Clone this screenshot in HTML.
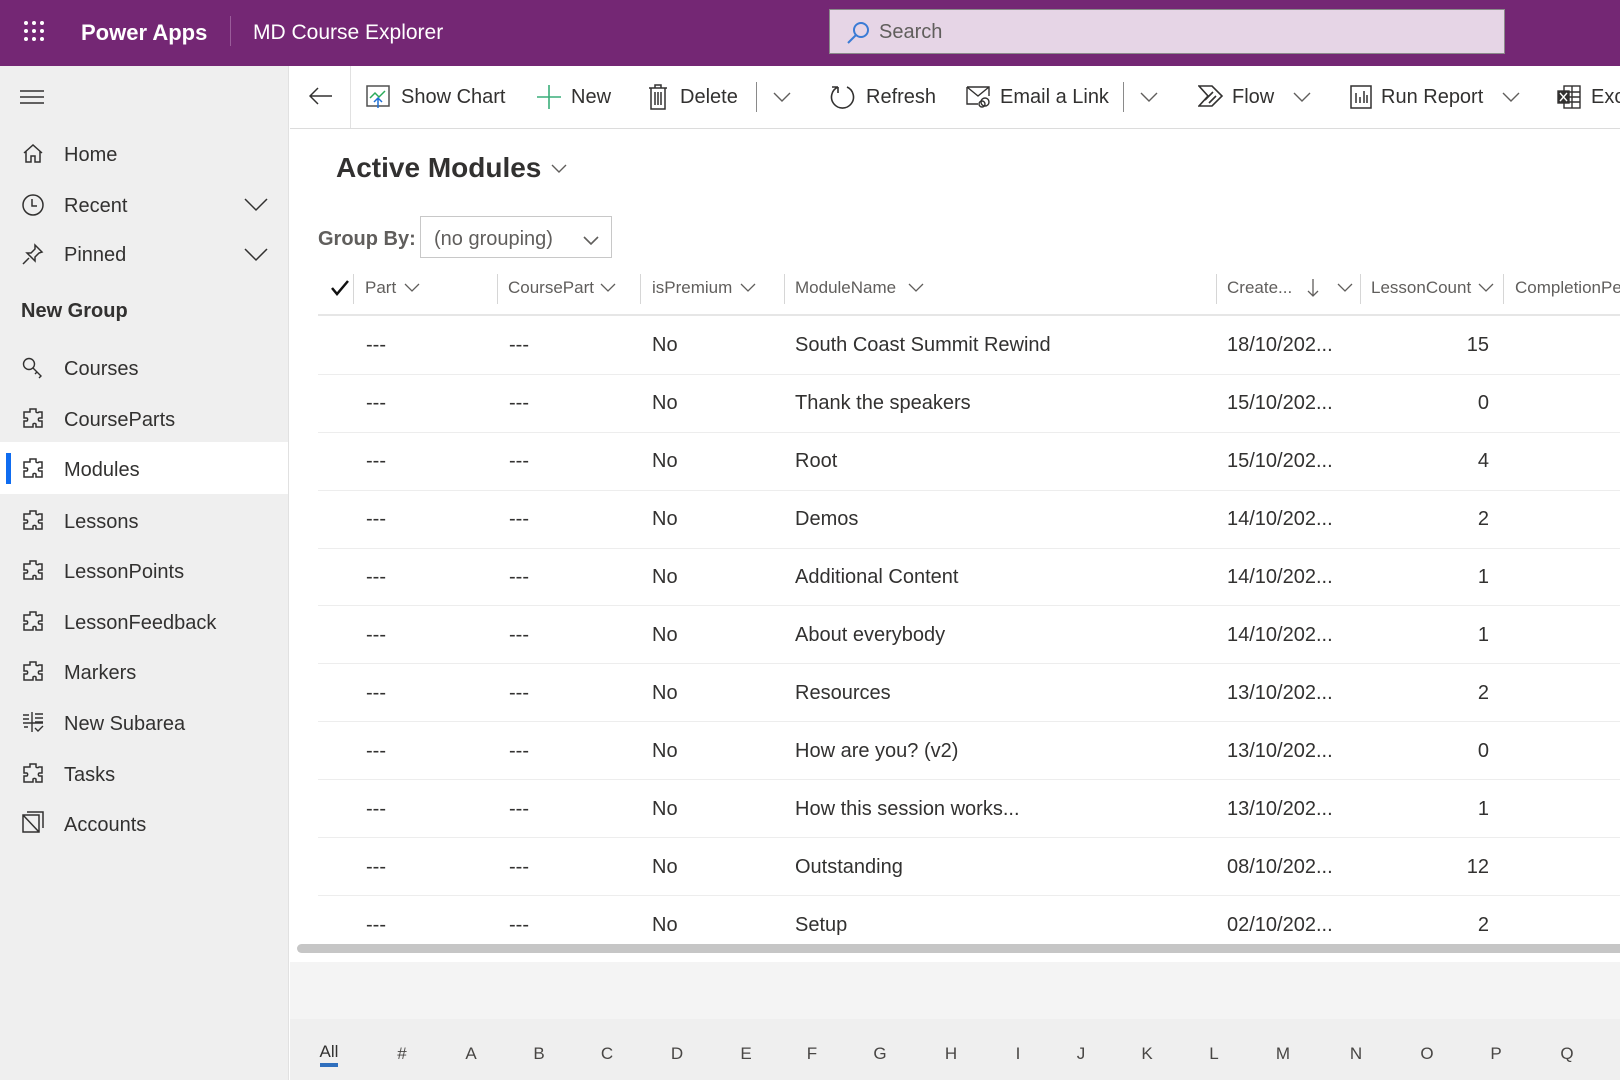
<!DOCTYPE html>
<html><head><meta charset="utf-8"><style>
*{margin:0;padding:0;box-sizing:border-box}
body{width:1620px;height:1080px;overflow:hidden;background:#fff;font-family:"Liberation Sans",sans-serif;color:#323130;position:relative}
.a{position:absolute;white-space:nowrap}
#hdr{left:0;top:0;width:1620px;height:66px;background:#742774}
#side{left:0;top:66px;width:289px;height:1014px;background:#efefef;border-right:1px solid #e1e1e1}
.nav{position:absolute;left:64px;font-size:20px;color:#323130;line-height:24px}
.ni{position:absolute;left:22px;width:22px;height:22px}
.cmd{font-size:20px;color:#323130;top:85px;line-height:24px}
.hd{font-size:17px;color:#605e5c;top:278px;line-height:20px}
.cs{position:absolute;top:274px;width:1px;height:30px;background:#d6d6d6}
.r{font-size:20px;color:#323130;line-height:24px}
.rl{position:absolute;left:318px;width:1302px;height:1px;background:#ededed}
.al{font-size:17px;color:#484644;top:1044px;line-height:20px;transform:translateX(-50%)}
</style></head><body>
<div class="a" id="hdr"></div>
<svg class="a" style="left:23px;top:20px" width="22" height="22" viewBox="0 0 22 22" fill="#fff"><circle cx="3" cy="3" r="2"/><circle cx="11" cy="3" r="2"/><circle cx="19" cy="3" r="2"/><circle cx="3" cy="11" r="2"/><circle cx="11" cy="11" r="2"/><circle cx="19" cy="11" r="2"/><circle cx="3" cy="19" r="2"/><circle cx="11" cy="19" r="2"/><circle cx="19" cy="19" r="2"/></svg>
<div class="a" style="left:81px;top:19px;font-size:22px;font-weight:bold;color:#fff;line-height:28px">Power Apps</div>
<div class="a" style="left:230px;top:16px;width:1px;height:30px;background:#9a5c9a"></div>
<div class="a" style="left:253px;top:20px;font-size:21px;color:#fff;line-height:26px">MD Course Explorer</div>
<div class="a" style="left:829px;top:9px;width:676px;height:45px;background:#e6d5e6;border:1px solid #8a8a8a"></div>
<svg class="a" style="left:846px;top:21px" width="24" height="24" viewBox="0 0 24 24" fill="none" stroke="#3a7bd5" stroke-width="2"><circle cx="15" cy="9" r="7"/><path d="M10 14L2 22"/></svg>
<div class="a" style="left:879px;top:20px;font-size:20px;color:#605e5c;line-height:24px">Search</div>

<div class="a" id="side"></div>
<svg class="a" style="left:20px;top:89px" width="24" height="16" viewBox="0 0 24 16" stroke="#323130" stroke-width="1.6"><path d="M0 2H24M0 8H24M0 14H24"/></svg>
<svg class="ni" style="top:142px" viewBox="0 0 22 22" fill="none" stroke="#323130" stroke-width="1.5"><path d="M2 11L11 3l9 8M4 9v11h5v-6h4v6h5V9"/></svg>
<div class="nav" style="top:143px">Home</div>
<svg class="ni" style="top:194px" viewBox="0 0 22 22" fill="none" stroke="#323130" stroke-width="1.5"><circle cx="11" cy="11" r="10"/><path d="M10 5v7h5"/></svg>
<div class="nav" style="top:194px">Recent</div>
<svg class="a" style="left:244px;top:198px" width="24" height="14" viewBox="0 0 24 14" fill="none" stroke="#323130" stroke-width="1.5"><path d="M1 1l11 11L23 1"/></svg>
<svg class="ni" style="top:243px" viewBox="0 0 22 22" fill="none" stroke="#323130" stroke-width="1.5"><path d="M13 2l7 7-3 1-4 4 0 4-8-8 4 0 4-4z M7 15L1 21"/></svg>
<div class="nav" style="top:243px">Pinned</div>
<svg class="a" style="left:244px;top:248px" width="24" height="14" viewBox="0 0 24 14" fill="none" stroke="#323130" stroke-width="1.5"><path d="M1 1l11 11L23 1"/></svg>
<div class="nav" style="left:21px;top:299px;font-weight:bold">New Group</div>
<div class="a" style="left:0;top:442px;width:288px;height:52px;background:#fff"></div>
<div class="a" style="left:6px;top:453px;width:5px;height:31px;background:#0f6cf0"></div>
<svg class="ni" style="top:357px" viewBox="0 0 22 22" fill="none" stroke="#323130" stroke-width="1.4"><circle cx="7" cy="7" r="5.5"/><path d="M11 11l8 8-2 2M15 15l-2 2"/></svg>
<div class="nav" style="top:357px">Courses</div>
<div class="nav" style="top:408px">CourseParts</div>
<div class="nav" style="top:458px">Modules</div>
<div class="nav" style="top:510px">Lessons</div>
<div class="nav" style="top:560px">LessonPoints</div>
<div class="nav" style="top:611px">LessonFeedback</div>
<div class="nav" style="top:661px">Markers</div>
<svg class="ni" style="top:711px" viewBox="0 0 22 22" fill="none" stroke="#323130" stroke-width="1.4"><path d="M10 1v20M1 4h6M1 8h6M13 3h8M13 7h8M13 11h8M1 12h20M2 16h4M13 17l3 3 5-5"/></svg>
<div class="nav" style="top:712px">New Subarea</div>
<div class="nav" style="top:763px">Tasks</div>
<svg class="ni" style="top:811px" viewBox="0 0 22 22" fill="none" stroke="#323130" stroke-width="1.5"><path d="M1 4h16v17H1zM5 1h16v16M1 4l16 17"/></svg>
<div class="nav" style="top:813px">Accounts</div>
<svg width="0" height="0" style="position:absolute"><defs><g id="pz"><path d="M8 2h6v3a2 2 0 0 0 3 0h3v6h-3a2 2 0 0 0 0 3h3v6h-6v-3a2 2 0 0 0-3 0v3H2v-6h3a2 2 0 0 0 0-3H2V5h6z" transform="translate(0,-1)" fill="none" stroke="#323130" stroke-width="1.5"/></g></defs></svg>
<svg class="ni" style="top:408px" viewBox="0 0 22 22"><use href="#pz"/></svg>
<svg class="ni" style="top:458px" viewBox="0 0 22 22"><use href="#pz"/></svg>
<svg class="ni" style="top:510px" viewBox="0 0 22 22"><use href="#pz"/></svg>
<svg class="ni" style="top:560px" viewBox="0 0 22 22"><use href="#pz"/></svg>
<svg class="ni" style="top:611px" viewBox="0 0 22 22"><use href="#pz"/></svg>
<svg class="ni" style="top:661px" viewBox="0 0 22 22"><use href="#pz"/></svg>
<svg class="ni" style="top:763px" viewBox="0 0 22 22"><use href="#pz"/></svg>

<div class="a" style="left:290px;top:128px;width:1330px;height:1px;background:#dcdcdc"></div>
<div class="a" style="left:350px;top:66px;width:1px;height:62px;background:#e1e1e1"></div>
<svg class="a" style="left:309px;top:87px" width="24" height="18" viewBox="0 0 24 18" fill="none" stroke="#323130" stroke-width="1.5"><path d="M23 9H2M9 1L1 9l8 8"/></svg>
<svg class="a" style="left:366px;top:85px" width="24" height="24" viewBox="0 0 24 24" fill="none" stroke-width="1.5"><rect x="1" y="1" width="22" height="20" stroke="#505050"/><path d="M4 13l5-5 4 4 6-6" stroke="#2bab5a"/><path d="M12 23v-9M8 17l4-4 4 4" stroke="#1f6fd4"/></svg>
<div class="a cmd" style="left:401px">Show Chart</div>
<svg class="a" style="left:537px;top:85px" width="24" height="24" viewBox="0 0 24 24" stroke="#3aae7a" stroke-width="1.6"><path d="M12 0v24M0 12h24"/></svg>
<div class="a cmd" style="left:571px">New</div>
<svg class="a" style="left:648px;top:84px" width="20" height="26" viewBox="0 0 20 26" fill="none" stroke="#323130" stroke-width="1.5"><path d="M1 4h18M7 4V1h6v3M3 4v21h14V4M7 8v13M10 8v13M13 8v13"/></svg>
<div class="a cmd" style="left:680px">Delete</div>
<div class="a" style="left:756px;top:82px;width:1px;height:30px;background:#8a8a8a"></div>
<svg class="a" style="left:773px;top:92px" width="18" height="10" viewBox="0 0 18 10" fill="none" stroke="#605e5c" stroke-width="1.4"><path d="M1 1l8 8 8-8"/></svg>
<svg class="a" style="left:830px;top:83px" width="26" height="28" viewBox="0 0 26 28" fill="none" stroke="#323130" stroke-width="1.6"><path d="M8 4A11 11 0 1 0 17 4M8 4V10M8 4H2"/></svg>
<div class="a cmd" style="left:866px">Refresh</div>
<svg class="a" style="left:966px;top:86px" width="26" height="22" viewBox="0 0 26 22" fill="none" stroke="#323130" stroke-width="1.4"><path d="M1 1h22v9M1 1v17h11M1 1l11 9 11-9"/><circle cx="19" cy="16" r="4"/><circle cx="16" cy="18" r="3"/></svg>
<div class="a cmd" style="left:1000px">Email a Link</div>
<div class="a" style="left:1123px;top:82px;width:1px;height:30px;background:#8a8a8a"></div>
<svg class="a" style="left:1140px;top:92px" width="18" height="10" viewBox="0 0 18 10" fill="none" stroke="#605e5c" stroke-width="1.4"><path d="M1 1l8 8 8-8"/></svg>
<svg class="a" style="left:1198px;top:85px" width="26" height="22" viewBox="0 0 26 22" fill="none" stroke="#323130" stroke-width="1.6"><path d="M1 1h13l10 10-10 10H1l9-10z M7 15l8-8M11 18l7-7"/></svg>
<div class="a cmd" style="left:1232px">Flow</div>
<svg class="a" style="left:1293px;top:92px" width="18" height="10" viewBox="0 0 18 10" fill="none" stroke="#605e5c" stroke-width="1.4"><path d="M1 1l8 8 8-8"/></svg>
<svg class="a" style="left:1350px;top:85px" width="22" height="24" viewBox="0 0 22 24" fill="none" stroke="#323130" stroke-width="1.5"><rect x="1" y="1" width="20" height="22"/><path d="M6 8v10M10 12v6M14 6v12M17 10v8"/></svg>
<div class="a cmd" style="left:1381px">Run Report</div>
<svg class="a" style="left:1502px;top:92px" width="18" height="10" viewBox="0 0 18 10" fill="none" stroke="#605e5c" stroke-width="1.4"><path d="M1 1l8 8 8-8"/></svg>
<svg class="a" style="left:1557px;top:85px" width="24" height="24" viewBox="0 0 24 24" fill="none" stroke="#323130" stroke-width="1.4"><rect x="7" y="1" width="16" height="22"/><path d="M7 7h16M7 12h16M7 17h16M15 1v22"/><rect x="1" y="6" width="11" height="12" fill="#323130"/><path d="M3 8l7 8M10 8l-7 8" stroke="#fff"/></svg>
<div class="a cmd" style="left:1591px">Exc</div>

<div class="a" style="left:336px;top:151px;font-size:28px;font-weight:bold;color:#323130;line-height:34px">Active Modules</div>
<svg class="a" style="left:551px;top:164px" width="16" height="10" viewBox="0 0 16 10" fill="none" stroke="#605e5c" stroke-width="1.4"><path d="M1 1l7 7 7-7"/></svg>
<div class="a" style="left:318px;top:227px;font-size:20px;font-weight:bold;color:#605e5c;line-height:24px">Group By:</div>
<div class="a" style="left:420px;top:216px;width:192px;height:42px;border:1px solid #c8c8c8"></div>
<div class="a" style="left:434px;top:227px;font-size:20px;color:#605e5c;line-height:24px">(no grouping)</div>
<svg class="a" style="left:583px;top:236px" width="16" height="10" viewBox="0 0 16 10" fill="none" stroke="#605e5c" stroke-width="1.6"><path d="M1 1l7 7 7-7"/></svg>

<svg class="a" style="left:331px;top:280px" width="18" height="16" viewBox="0 0 18 16" fill="none" stroke="#111" stroke-width="2.5"><path d="M1 8l5 6L17 1"/></svg>
<div class="cs" style="left:353px"></div><div class="cs" style="left:497px"></div><div class="cs" style="left:640px"></div><div class="cs" style="left:784px"></div><div class="cs" style="left:1216px"></div><div class="cs" style="left:1360px"></div><div class="cs" style="left:1503px"></div>
<div class="a hd" style="left:365px">Part</div>
<div class="a hd" style="left:508px">CoursePart</div>
<div class="a hd" style="left:652px">isPremium</div>
<div class="a hd" style="left:795px">ModuleName</div>
<div class="a hd" style="left:1227px">Create...</div>
<div class="a hd" style="left:1371px">LessonCount</div>
<div class="a hd" style="left:1515px">CompletionPe</div>
<svg class="a" style="left:404px;top:283px" width="16" height="10" viewBox="0 0 16 10" fill="none" stroke="#605e5c" stroke-width="1.3"><path d="M1 1l7 7 7-7"/></svg>
<svg class="a" style="left:600px;top:283px" width="16" height="10" viewBox="0 0 16 10" fill="none" stroke="#605e5c" stroke-width="1.3"><path d="M1 1l7 7 7-7"/></svg>
<svg class="a" style="left:740px;top:283px" width="16" height="10" viewBox="0 0 16 10" fill="none" stroke="#605e5c" stroke-width="1.3"><path d="M1 1l7 7 7-7"/></svg>
<svg class="a" style="left:908px;top:283px" width="16" height="10" viewBox="0 0 16 10" fill="none" stroke="#605e5c" stroke-width="1.3"><path d="M1 1l7 7 7-7"/></svg>
<svg class="a" style="left:1307px;top:278px" width="12" height="20" viewBox="0 0 12 20" fill="none" stroke="#605e5c" stroke-width="1.3"><path d="M6 1v17M1 13l5 5 5-5"/></svg>
<svg class="a" style="left:1337px;top:283px" width="16" height="10" viewBox="0 0 16 10" fill="none" stroke="#605e5c" stroke-width="1.3"><path d="M1 1l7 7 7-7"/></svg>
<svg class="a" style="left:1478px;top:283px" width="16" height="10" viewBox="0 0 16 10" fill="none" stroke="#605e5c" stroke-width="1.3"><path d="M1 1l7 7 7-7"/></svg>
<div class="a" style="left:318px;top:314px;width:1302px;height:2px;background:#e6e6e6"></div>

<div class="rl" style="top:374px"></div><div class="rl" style="top:432px"></div><div class="rl" style="top:490px"></div><div class="rl" style="top:548px"></div><div class="rl" style="top:605px"></div><div class="rl" style="top:663px"></div><div class="rl" style="top:721px"></div><div class="rl" style="top:779px"></div><div class="rl" style="top:837px"></div><div class="rl" style="top:895px"></div>

<div class="a r" style="left:366px;top:333px">---</div><div class="a r" style="left:509px;top:333px">---</div><div class="a r" style="left:652px;top:333px">No</div><div class="a r" style="left:795px;top:333px">South Coast Summit Rewind</div><div class="a r" style="left:1227px;top:333px">18/10/202...</div><div class="a r" style="right:131px;top:333px">15</div>
<div class="a r" style="left:366px;top:391px">---</div><div class="a r" style="left:509px;top:391px">---</div><div class="a r" style="left:652px;top:391px">No</div><div class="a r" style="left:795px;top:391px">Thank the speakers</div><div class="a r" style="left:1227px;top:391px">15/10/202...</div><div class="a r" style="right:131px;top:391px">0</div>
<div class="a r" style="left:366px;top:449px">---</div><div class="a r" style="left:509px;top:449px">---</div><div class="a r" style="left:652px;top:449px">No</div><div class="a r" style="left:795px;top:449px">Root</div><div class="a r" style="left:1227px;top:449px">15/10/202...</div><div class="a r" style="right:131px;top:449px">4</div>
<div class="a r" style="left:366px;top:507px">---</div><div class="a r" style="left:509px;top:507px">---</div><div class="a r" style="left:652px;top:507px">No</div><div class="a r" style="left:795px;top:507px">Demos</div><div class="a r" style="left:1227px;top:507px">14/10/202...</div><div class="a r" style="right:131px;top:507px">2</div>
<div class="a r" style="left:366px;top:565px">---</div><div class="a r" style="left:509px;top:565px">---</div><div class="a r" style="left:652px;top:565px">No</div><div class="a r" style="left:795px;top:565px">Additional Content</div><div class="a r" style="left:1227px;top:565px">14/10/202...</div><div class="a r" style="right:131px;top:565px">1</div>
<div class="a r" style="left:366px;top:623px">---</div><div class="a r" style="left:509px;top:623px">---</div><div class="a r" style="left:652px;top:623px">No</div><div class="a r" style="left:795px;top:623px">About everybody</div><div class="a r" style="left:1227px;top:623px">14/10/202...</div><div class="a r" style="right:131px;top:623px">1</div>
<div class="a r" style="left:366px;top:681px">---</div><div class="a r" style="left:509px;top:681px">---</div><div class="a r" style="left:652px;top:681px">No</div><div class="a r" style="left:795px;top:681px">Resources</div><div class="a r" style="left:1227px;top:681px">13/10/202...</div><div class="a r" style="right:131px;top:681px">2</div>
<div class="a r" style="left:366px;top:739px">---</div><div class="a r" style="left:509px;top:739px">---</div><div class="a r" style="left:652px;top:739px">No</div><div class="a r" style="left:795px;top:739px">How are you? (v2)</div><div class="a r" style="left:1227px;top:739px">13/10/202...</div><div class="a r" style="right:131px;top:739px">0</div>
<div class="a r" style="left:366px;top:797px">---</div><div class="a r" style="left:509px;top:797px">---</div><div class="a r" style="left:652px;top:797px">No</div><div class="a r" style="left:795px;top:797px">How this session works...</div><div class="a r" style="left:1227px;top:797px">13/10/202...</div><div class="a r" style="right:131px;top:797px">1</div>
<div class="a r" style="left:366px;top:855px">---</div><div class="a r" style="left:509px;top:855px">---</div><div class="a r" style="left:652px;top:855px">No</div><div class="a r" style="left:795px;top:855px">Outstanding</div><div class="a r" style="left:1227px;top:855px">08/10/202...</div><div class="a r" style="right:131px;top:855px">12</div>
<div class="a r" style="left:366px;top:913px">---</div><div class="a r" style="left:509px;top:913px">---</div><div class="a r" style="left:652px;top:913px">No</div><div class="a r" style="left:795px;top:913px">Setup</div><div class="a r" style="left:1227px;top:913px">02/10/202...</div><div class="a r" style="right:131px;top:913px">2</div>

<div class="a" style="left:297px;top:944px;width:1330px;height:9px;background:#c6c6c6;border-radius:5px"></div>
<div class="a" style="left:290px;top:962px;width:1330px;height:57px;background:#f4f4f4"></div>
<div class="a" style="left:290px;top:1019px;width:1330px;height:61px;background:#efefef"></div>

<div class="a al" style="left:329px;top:1042px;color:#323130">All</div>
<div class="a" style="left:320px;top:1063px;width:18px;height:4px;background:#2f6fbd"></div>
<div class="a al" style="left:402px">#</div>
<div class="a al" style="left:471px">A</div>
<div class="a al" style="left:539px">B</div>
<div class="a al" style="left:607px">C</div>
<div class="a al" style="left:677px">D</div>
<div class="a al" style="left:746px">E</div>
<div class="a al" style="left:812px">F</div>
<div class="a al" style="left:880px">G</div>
<div class="a al" style="left:951px">H</div>
<div class="a al" style="left:1018px">I</div>
<div class="a al" style="left:1081px">J</div>
<div class="a al" style="left:1147px">K</div>
<div class="a al" style="left:1214px">L</div>
<div class="a al" style="left:1283px">M</div>
<div class="a al" style="left:1356px">N</div>
<div class="a al" style="left:1427px">O</div>
<div class="a al" style="left:1496px">P</div>
<div class="a al" style="left:1567px">Q</div>
</body></html>
